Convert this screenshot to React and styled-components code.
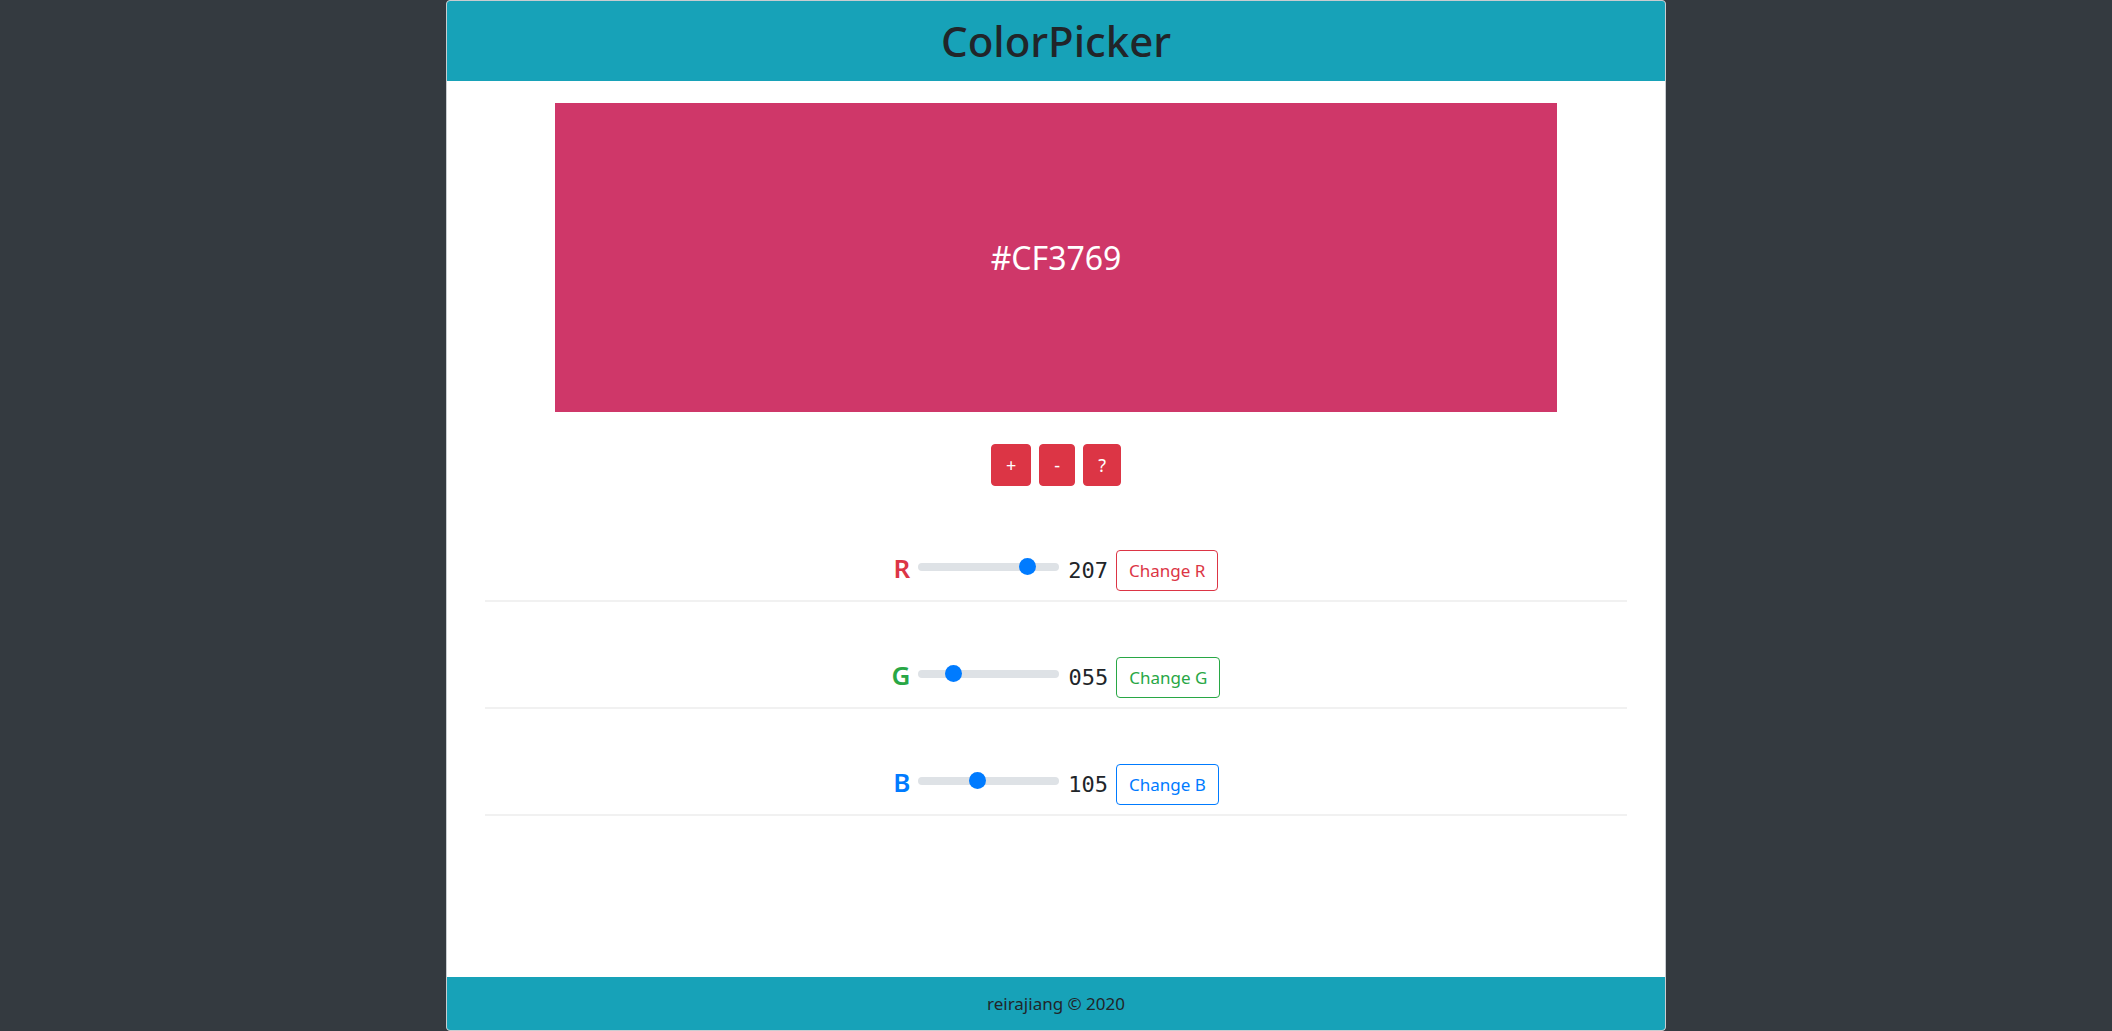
import React, { useState } from "react";
import styled, { createGlobalStyle } from "styled-components";

const GlobalStyle = createGlobalStyle`
  * {
    box-sizing: border-box;
  }
  body {
    margin: 0;
    background: #343a40;
    font-family: "Noto Sans", "Open Sans", sans-serif;
    color: #212529;
  }
`;

const channels = [
  { key: "r", label: "R", color: "#dc3545" },
  { key: "g", label: "G", color: "#28a745" },
  { key: "b", label: "B", color: "#007bff" },
];

const toHex = (n) => n.toString(16).toUpperCase().padStart(2, "0");

function App() {
  const [rgb, setRgb] = useState({ r: 207, g: 55, b: 105 });
  const hex = "#" + toHex(rgb.r) + toHex(rgb.g) + toHex(rgb.b);

  const setChannel = (key, value) => {
    setRgb({ ...rgb, [key]: Number(value) });
  };

  return (
    <>
      <GlobalStyle />
      <Card>
        <Header>
          <Title>ColorPicker</Title>
        </Header>
        <Body>
          <Swatch style={{ background: hex }}>{hex}</Swatch>
          <Actions>
            <ActionButton>+</ActionButton>
            <ActionButton>-</ActionButton>
            <ActionButton>?</ActionButton>
          </Actions>
          <ChannelList>
            {channels.map((c) => (
              <ChannelRow key={c.key}>
                <ChannelLabel color={c.color}>{c.label}</ChannelLabel>
                <Slider
                  type="range"
                  min="0"
                  max="255"
                  value={rgb[c.key]}
                  onChange={(e) => setChannel(c.key, e.target.value)}
                />
                <ChannelValue>{String(rgb[c.key]).padStart(3, "0")}</ChannelValue>
                <OutlineButton color={c.color}>Change {c.label}</OutlineButton>
              </ChannelRow>
            ))}
          </ChannelList>
        </Body>
        <Footer>reirajiang © 2020</Footer>
      </Card>
    </>
  );
}

const Card = styled.div`
  width: 1220px;
  height: 100vh;
  margin: 0 auto;
  display: flex;
  flex-direction: column;
  background: #fff;
  border: 1px solid #c8ccd0;
  border-radius: 4px;
  overflow: hidden;
`;

const Header = styled.header`
  height: 80px;
  flex-shrink: 0;
  display: flex;
  align-items: center;
  justify-content: center;
  background: #17a2b8;
`;

const Title = styled.h1`
  margin: 0;
  font-size: 42px;
  font-weight: 500;
  line-height: 1.2;
  color: #212529;
`;

const Body = styled.main`
  flex: 1;
  padding: 22px 38px 0;
`;

const Swatch = styled.div`
  width: 1002px;
  height: 309px;
  margin: 0 auto;
  display: flex;
  align-items: center;
  justify-content: center;
  color: #fff;
  font-size: 32px;
`;

const Actions = styled.div`
  display: flex;
  justify-content: center;
  gap: 8px;
  margin-top: 32px;
`;

const ActionButton = styled.button`
  height: 42px;
  min-width: 35px;
  padding: 0 14px;
  border: 1px solid #dc3545;
  border-radius: 4px;
  background: #dc3545;
  color: #fff;
  font-family: inherit;
  font-size: 18px;
  cursor: pointer;
`;

const ChannelList = styled.div`
  margin-top: 9px;
`;

const ChannelRow = styled.div`
  display: flex;
  align-items: center;
  justify-content: center;
  gap: 8px;
  padding: 55px 0 9px;
  border-bottom: 2px solid #f1f1f1;
`;

const ChannelLabel = styled.span`
  font-size: 26px;
  font-weight: 600;
  line-height: 1;
  margin-bottom: 5px;
  color: ${(p) => p.color};
`;

const Slider = styled.input`
  -webkit-appearance: none;
  appearance: none;
  width: 141px;
  height: 8px;
  margin: 0 1px 0 0;
  border-radius: 4px;
  background: #dee2e6;
  outline: none;
  position: relative;
  top: -4px;

  &::-webkit-slider-thumb {
    -webkit-appearance: none;
    width: 17px;
    height: 17px;
    border-radius: 50%;
    background: #007bff;
    border: none;
    cursor: pointer;
  }
`;

const ChannelValue = styled.span`
  font-family: "DejaVu Sans Mono", "Liberation Mono", monospace;
  font-size: 22px;
  line-height: 1;
  color: #212529;
`;

const OutlineButton = styled.button`
  padding: 6px 12px;
  border: 1px solid ${(p) => p.color};
  border-radius: 4px;
  background: transparent;
  color: ${(p) => p.color};
  font-family: inherit;
  font-size: 17px;
  line-height: 27px;
  cursor: pointer;
`;

const Footer = styled.footer`
  height: 53px;
  flex-shrink: 0;
  display: flex;
  align-items: center;
  justify-content: center;
  background: #17a2b8;
  font-size: 17px;
  color: #212529;
`;

export default App;
